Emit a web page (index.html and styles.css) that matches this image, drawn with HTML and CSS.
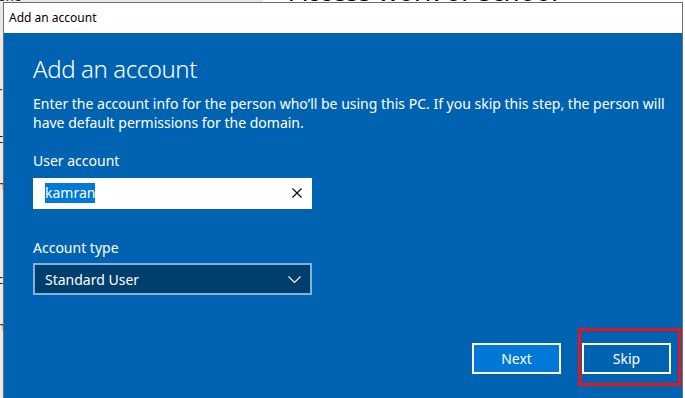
FILE: index.html
```html
<!DOCTYPE html>
<html>
<head>
<meta charset="utf-8">
<link rel="stylesheet" href="styles.css">
</head>
<body>
<div class="backdrop">
  <div class="bd-left">
    <span class="bd-frag">one</span>
    <div class="bd-list">
      <span>r</span><span>c</span><span>n</span><span>i</span><span>c</span><span>n</span>
    </div>
  </div>
  <div class="bd-right"><span class="bd-title">Access work or school</span></div>
</div>
<div class="dialog">
  <div class="titlebar">Add an account</div>
  <div class="content">
    <h1 class="heading">Add an account</h1>
    <p class="desc">Enter the account info for the person who’ll be using this PC. If you skip this step, the person will have default permissions for the domain.</p>
    <label class="label">User account</label>
    <div class="input">
      <span class="sel">kamran</span>
      <svg class="clear" width="10" height="10" viewBox="0 0 10 10"><path d="M0.5 0.5 L9.5 9.5 M9.5 0.5 L0.5 9.5" stroke="#000" stroke-width="1.1" fill="none"/></svg>
    </div>
    <label class="label label2">Account type</label>
    <div class="select">
      <span>Standard User</span>
      <svg class="chev" width="13" height="7" viewBox="0 0 13 7"><path d="M0.5 0.5 L6.5 6.5 L12.5 0.5" stroke="#fff" stroke-width="1.1" fill="none"/></svg>
    </div>
    <div class="actions">
      <button class="btn btn-next">Next</button>
      <div class="highlight"><button class="btn btn-skip">Skip</button></div>
    </div>
  </div>
</div>
</body>
</html>
```
FILE: styles.css
```css
html, body {
  margin: 0;
  padding: 0;
  width: 685px;
  height: 398px;
  overflow: hidden;
  background: #f0f0f0;
  font-family: "Noto Sans", "Open Sans", sans-serif;
}
.backdrop {
  position: absolute;
  left: 0;
  top: 0;
  width: 685px;
  height: 398px;
  display: flex;
}
.bd-left {
  width: 263px;
  background: #e9e9e9;
  position: relative;
  overflow: hidden;
}
.bd-frag {
  position: absolute;
  left: -2px;
  top: -13px;
  font-size: 13px;
  color: #222;
}
.bd-list {
  display: flex;
  flex-direction: column;
  gap: 27px;
  padding-top: 81px;
  margin-left: -3px;
  font-size: 13px;
  line-height: 20px;
  color: #222;
}
.bd-right {
  flex: 1;
  background: #fff;
  position: relative;
  overflow: hidden;
}
.bd-title {
  position: absolute;
  left: 27px;
  top: -27px;
  font-size: 26px;
  color: #000;
  white-space: nowrap;
}
.dialog {
  position: absolute;
  left: 3px;
  top: 2px;
  width: 678px;
  height: 400px;
  border: 1px solid #6e6e6e;
  border-bottom: none;
  background: #0063b1;
  display: flex;
  flex-direction: column;
}
.titlebar {
  height: 30px;
  background: #fff;
  color: #000;
  font-size: 12px;
  line-height: 30px;
  padding-left: 5px;
}
.content {
  flex: 1;
  padding: 20px 0 0 29px;
  color: #fff;
  display: flex;
  flex-direction: column;
  align-items: flex-start;
}
.heading {
  margin: 0;
  font-weight: 300;
  font-size: 24px;
  line-height: 32px;
  letter-spacing: -0.4px;
}
.desc {
  margin: 9px 0 0 0;
  width: 650px;
  font-size: 14px;
  line-height: 19px;
}
.label {
  margin-top: 19px;
  font-size: 14px;
  line-height: 20px;
}
.label2 {
  margin-top: 29px;
}
.input {
  margin-top: 7px;
  width: 279px;
  height: 31px;
  box-sizing: border-box;
  background: #fff;
  display: flex;
  align-items: center;
  justify-content: space-between;
  padding: 0 10px 2px 12px;
}
.sel {
  background: #0078d7;
  color: #fff;
  font-size: 14px;
  line-height: 20px;
}
.select {
  margin-top: 5px;
  width: 279px;
  height: 32px;
  box-sizing: border-box;
  background: #003e6e;
  border: 2px solid #85b0da;
  display: flex;
  align-items: center;
  justify-content: space-between;
  padding: 0 9px 0 10px;
  font-size: 14px;
}
.actions {
  align-self: flex-end;
  margin-top: 33px;
  margin-right: 1px;
  display: flex;
  align-items: flex-start;
}
.btn {
  width: 89px;
  height: 31px;
  border: 2px solid #fff;
  color: #fff;
  font-family: inherit;
  font-size: 14px;
  padding: 0;
}
.btn-next {
  margin-top: 15px;
  background: #0078d7;
}
.btn-skip {
  display: block;
  background: #0063b1;
}
.highlight {
  margin-left: 17px;
  border: 3px solid #e8141c;
  padding: 12px 7px 9px 1px;
}
```
